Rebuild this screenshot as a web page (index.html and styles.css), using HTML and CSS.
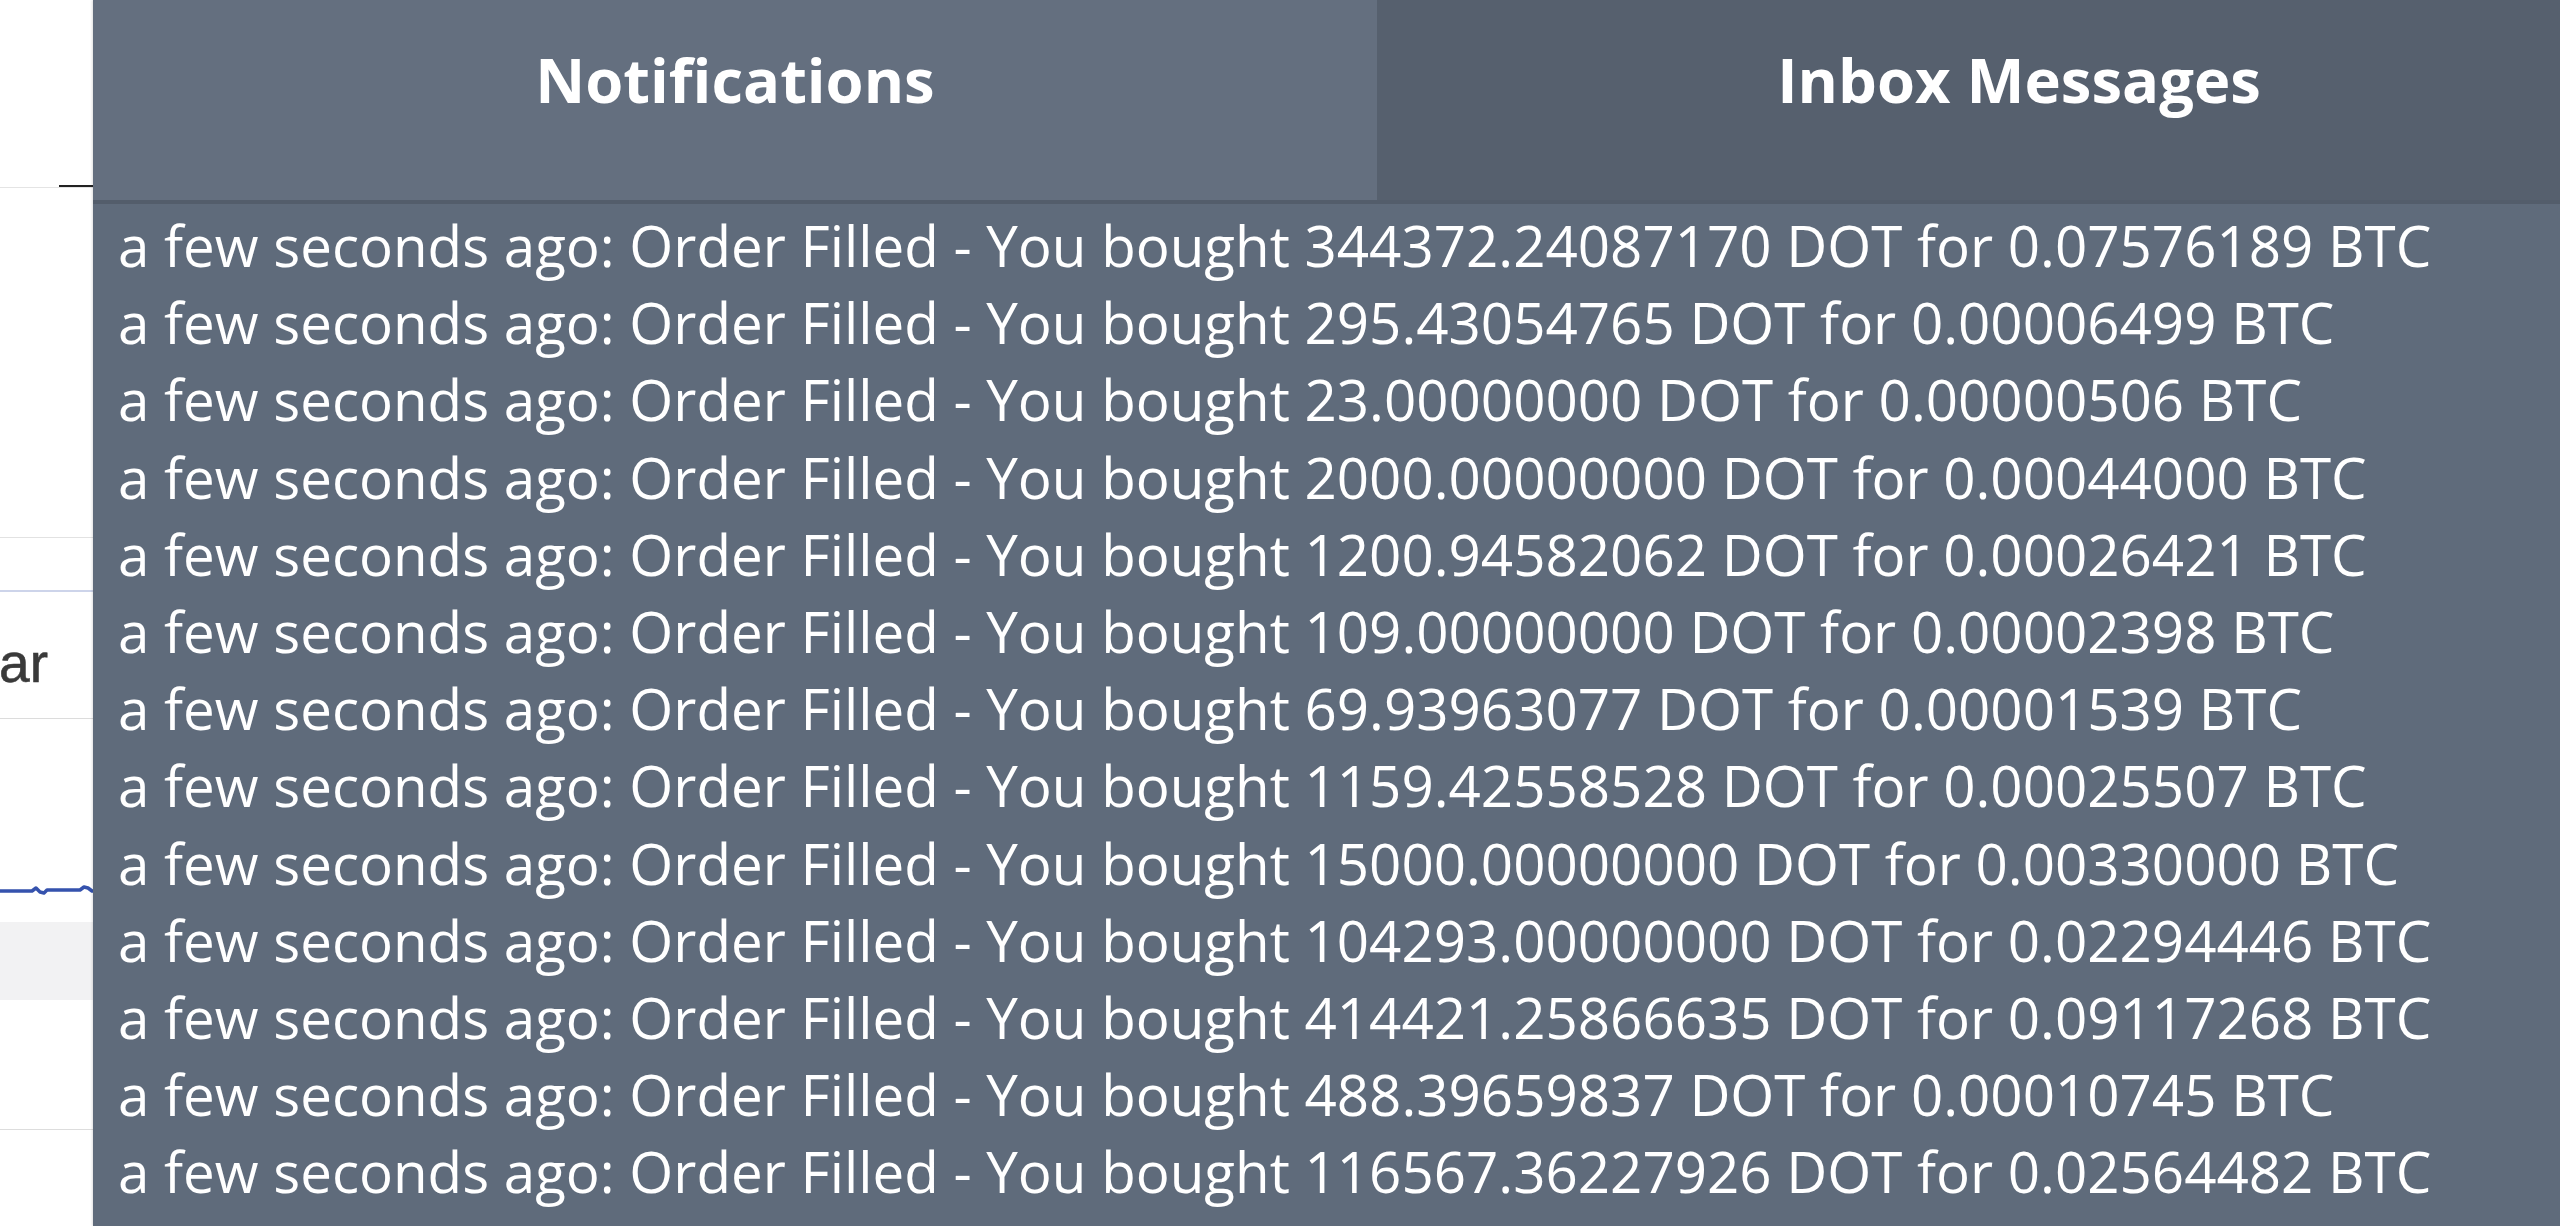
FILE: index.html
```html
<!DOCTYPE html>
<html lang="en">
<head>
<meta charset="utf-8">
<title>Notifications</title>
<link rel="stylesheet" href="styles.css">
</head>
<body>
<div class="page">
  <div class="nav"><div class="nav-active"></div></div>
  <div class="gap-a"></div>
  <div class="rule-blue"></div>
  <div class="range-row"><span class="range-label">ar</span></div>
  <div class="chart">
    <svg class="chart-line" width="100" height="20" viewBox="0 0 100 20">
      <polyline points="0,11 32,11 36,8 40,12 44,13 47,10 60,10 80,10 84,7 88,8 92,11 100,11" fill="none" stroke="#3552ad" stroke-width="3.5" stroke-linejoin="round"/>
    </svg>
  </div>
  <div class="band"></div>
  <div class="gap-b"></div>
</div>

<div class="panel">
  <div class="tabs">
    <div class="tab tab-active">Notifications</div>
    <div class="tab">Inbox Messages</div>
  </div>
  <ul class="list">
    <li>a few seconds ago: Order Filled - You bought 344372.24087170 DOT for 0.07576189 BTC</li>
    <li>a few seconds ago: Order Filled - You bought 295.43054765 DOT for 0.00006499 BTC</li>
    <li>a few seconds ago: Order Filled - You bought 23.00000000 DOT for 0.00000506 BTC</li>
    <li>a few seconds ago: Order Filled - You bought 2000.00000000 DOT for 0.00044000 BTC</li>
    <li>a few seconds ago: Order Filled - You bought 1200.94582062 DOT for 0.00026421 BTC</li>
    <li>a few seconds ago: Order Filled - You bought 109.00000000 DOT for 0.00002398 BTC</li>
    <li>a few seconds ago: Order Filled - You bought 69.93963077 DOT for 0.00001539 BTC</li>
    <li>a few seconds ago: Order Filled - You bought 1159.42558528 DOT for 0.00025507 BTC</li>
    <li>a few seconds ago: Order Filled - You bought 15000.00000000 DOT for 0.00330000 BTC</li>
    <li>a few seconds ago: Order Filled - You bought 104293.00000000 DOT for 0.02294446 BTC</li>
    <li>a few seconds ago: Order Filled - You bought 414421.25866635 DOT for 0.09117268 BTC</li>
    <li>a few seconds ago: Order Filled - You bought 488.39659837 DOT for 0.00010745 BTC</li>
    <li>a few seconds ago: Order Filled - You bought 116567.36227926 DOT for 0.02564482 BTC</li>
  </ul>
</div>
</body>
</html>
```

FILE: styles.css
```css
html, body {
  margin: 0;
  padding: 0;
  height: 100%;
  overflow: hidden;
  background: #ffffff;
  font-family: "Open Sans", "Noto Sans", sans-serif;
}

.page {
  display: flex;
  flex-direction: column;
  width: 100%;
}

.nav {
  height: 187px;
  border-bottom: 1px solid #e4e4e4;
  display: flex;
  align-items: flex-end;
}

.nav-active {
  margin-left: 59px;
  width: 40px;
  height: 2px;
  background: #222222;
}

.gap-a {
  height: 349px;
  border-bottom: 1px solid #e2e2e2;
}

.rule-blue {
  height: 52px;
  border-bottom: 2px solid #cdd4ea;
}

.range-row {
  height: 126px;
  border-bottom: 1px solid #dcdcdc;
  display: flex;
  align-items: center;
}

.range-label {
  width: 48px;
  display: flex;
  justify-content: flex-end;
  white-space: nowrap;
  font-family: "Liberation Sans", Arial, sans-serif;
  font-size: 55px;
  color: #3a3a3a;
  -webkit-text-stroke: 0.6px #3a3a3a;
  padding-top: 16px;
}

.chart {
  height: 203px;
  display: flex;
  align-items: flex-end;
}

.chart-line {
  display: block;
  margin-bottom: 22px;
}

.band {
  height: 78px;
  background: #f2f2f3;
}

.gap-b {
  height: 129px;
  border-bottom: 1px solid #dddddd;
}

.panel {
  position: absolute;
  top: 0;
  left: 93px;
  width: 2568px;
  height: 1226px;
  background: #5f6b7b;
  color: #ffffff;
  box-shadow: -1px 0 2px rgba(0, 0, 0, 0.12);
}

.tabs {
  display: flex;
  height: 200px;
  border-bottom: 4px solid #535d6b;
}

.tab {
  flex: 1;
  background: #56606e;
  text-align: center;
  font-weight: 700;
  font-size: 61.5px;
  padding-top: 37px;
  box-sizing: border-box;
}

.tab-active {
  background: #646f7f;
}

.list {
  list-style: none;
  margin: 0;
  padding: 3px 0 0 25px;
  font-size: 56.5px;
  line-height: 77.2px;
  white-space: nowrap;
}
```
